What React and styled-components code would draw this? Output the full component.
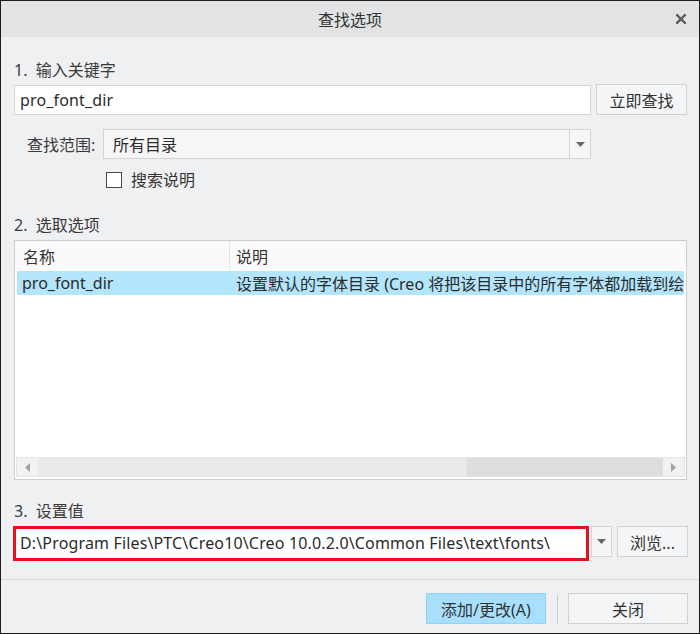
import React from "react";
import styled, { createGlobalStyle } from "styled-components";

const Global = createGlobalStyle`
  html, body { margin: 0; padding: 0; background: #ffffff; }
  body { font-family: "Noto Sans", "Noto Sans CJK SC", sans-serif; }
  * { box-sizing: border-box; }
`;

const Dialog = styled.div`
  width: 700px;
  height: 634px;
  border: 1px solid #1c1c1c;
  background: #eff0f2;
  display: flex;
  flex-direction: column;
  color: #333;
  font-size: 16px;
`;

const TitleBar = styled.div`
  height: 36px;
  flex: none;
  background: #e1e3e5;
  display: grid;
  grid-template-columns: 1fr auto 1fr;
  align-items: center;
`;

const Title = styled.div`
  grid-column: 2;
  font-size: 16px;
  color: #333;
  line-height: 20px;
  padding-top: 1px;
`;

const CloseBtn = styled.div`
  grid-column: 3;
  justify-self: end;
  margin-right: 13px;
  width: 10px;
  height: 10px;
  display: flex;
  margin-top: -1px;
`;

const Body = styled.div`
  flex: 1;
  display: flex;
  flex-direction: column;
  padding: 0 12px 0 13px;
`;

const SectionLabel = styled.div`
  height: 20px;
  line-height: 20px;
  margin-top: ${(p) => p.$mt}px;
  color: #3a3a3a;
  white-space: pre;
`;

const Row = styled.div`
  display: flex;
  align-items: ${(p) => p.$align || "center"};
  margin-top: ${(p) => p.$mt}px;
  padding-left: ${(p) => p.$pl || 0}px;
`;

const TextInput = styled.div`
  flex: 1;
  height: 30px;
  background: #ffffff;
  border: 1px solid #d2d4d6;
  padding: 0 5px;
  display: flex;
  align-items: center;
  color: #2b2b2b;
  white-space: nowrap;
  overflow: hidden;
  letter-spacing: 0.15px;
`;

const Button = styled.div`
  width: ${(p) => p.$w}px;
  height: ${(p) => p.$h || 31}px;
  margin-left: ${(p) => p.$ml || 0}px;
  flex: none;
  background: ${(p) => (p.$primary ? "#a8dffc" : "#f4f5f6")};
  border: 1px solid ${(p) => (p.$primary ? "#8fd4f8" : "#cfd1d3")};
  display: flex;
  align-items: center;
  justify-content: center;
  color: #333;
  white-space: nowrap;
`;

const FieldLabel = styled.div`
  width: 76px;
  flex: none;
  color: #3a3a3a;
`;

const Select = styled.div`
  width: 488px;
  height: 30px;
  display: flex;
  border: 1px solid #d2d4d6;
  background: #f6f6f7;
`;

const SelectText = styled.div`
  flex: 1;
  padding-left: 9px;
  display: flex;
  align-items: center;
  color: #2b2b2b;
`;

const ArrowCell = styled.div`
  width: 21px;
  flex: none;
  border-left: 1px solid #d2d4d6;
  display: flex;
  align-items: center;
  justify-content: center;
`;

const DropBox = styled.div`
  width: 21px;
  height: 31px;
  flex: none;
  margin-left: 2px;
  border: 1px solid #d2d4d6;
  background: #f4f5f6;
  display: flex;
  align-items: center;
  justify-content: center;
`;

const Tri = ({ dir = "down", color = "#666" }) => {
  const pts = {
    down: "0,0 9,0 4.5,5",
    left: "5,0 5,9 0,4.5",
    right: "0,0 0,9 5,4.5",
  }[dir];
  const vb = dir === "down" ? "0 0 9 5" : "0 0 5 9";
  const w = dir === "down" ? 9 : 5;
  const h = dir === "down" ? 5 : 9;
  return (
    <svg width={w} height={h} viewBox={vb}>
      <polygon points={pts} fill={color} />
    </svg>
  );
};

const CheckBox = styled.div`
  width: 16px;
  height: 16px;
  border: 1px solid #4a4a4a;
  background: #fff;
  flex: none;
`;

const CheckText = styled.div`
  margin-left: 9px;
  color: #333;
  line-height: 16px;
`;

const Table = styled.div`
  height: 240px;
  margin-top: 5px;
  border: 1px solid #cbcdcf;
  background: #ffffff;
  display: flex;
  flex-direction: column;
  padding: 0 1px 2px 1px;
`;

const HeaderRow = styled.div`
  height: 29px;
  flex: none;
  display: flex;
  background: #fafafa;
  margin: 0 -1px;
`;

const HeadCell = styled.div`
  width: ${(p) => (p.$w ? `${p.$w}px` : "auto")};
  flex: ${(p) => (p.$w ? "none" : 1)};
  padding-left: ${(p) => p.$pl}px;
  display: flex;
  align-items: center;
  border-right: ${(p) => (p.$w ? "1px solid #e4e5e6" : "none")};
  color: #333;
`;

const List = styled.div`
  flex: 1;
  padding: 1px 1px 0 1px;
`;

const DataRow = styled.div`
  height: 24px;
  display: flex;
  align-items: center;
  background: ${(p) => (p.$selected ? "#b3e5fc" : "transparent")};
  white-space: nowrap;
`;

const DataCell = styled.div`
  width: ${(p) => (p.$w ? `${p.$w}px` : "auto")};
  flex: ${(p) => (p.$w ? "none" : 1)};
  min-width: 0;
  padding-left: ${(p) => p.$pl}px;
  white-space: nowrap;
  color: #2b2b2b;
`;

const HScroll = styled.div`
  height: 20px;
  flex: none;
  display: flex;
  border: 1px solid #e3e4e5;
  background: #dcdddf;
`;

const ScrollArrow = styled.div`
  width: 21px;
  flex: none;
  background: #f1f2f3;
  display: flex;
  align-items: center;
  justify-content: center;
`;

const ScrollThumb = styled.div`
  width: 429px;
  flex: none;
  background: #e9eaeb;
  border-right: 1px solid #e3e4e5;
`;

const ScrollTrack = styled.div`
  flex: 1;
`;

const Highlight = styled.div`
  width: 576px;
  height: 35px;
  flex: none;
  border: 3px solid #e3101d;
  background: #fff;
  display: flex;
  align-items: center;
  padding: 0 4px 1px 4px;
  white-space: nowrap;
  overflow: hidden;
  color: #2b2b2b;
  margin-left: -1px;
  letter-spacing: 0.15px;
`;

const Footer = styled.div`
  height: 54px;
  flex: none;
  border-top: 1px solid #d3d5d7;
  display: flex;
  align-items: flex-start;
  justify-content: flex-end;
  padding: 13px 11px 0 0;
`;

const VSep = styled.div`
  width: 1px;
  height: 29px;
  margin: 2px 10px 0 11px;
  background: #c9cbcd;
`;

export default function App() {
  return (
    <>
      <Global />
      <Dialog>
        <TitleBar>
          <Title>查找选项</Title>
          <CloseBtn>
            <svg width="10" height="10" viewBox="0 0 10 10">
              <path d="M1 1 L9 9 M9 1 L1 9" stroke="#5a5a5a" strokeWidth="2.4" strokeLinecap="square" />
            </svg>
          </CloseBtn>
        </TitleBar>
        <Body>
          <SectionLabel $mt={23}>1.  输入关键字</SectionLabel>
          <Row $mt={4} $align="flex-end">
            <TextInput>pro_font_dir</TextInput>
            <Button $w={91} $ml={5}>立即查找</Button>
          </Row>
          <Row $mt={14} $pl={13}>
            <FieldLabel>查找范围:</FieldLabel>
            <Select>
              <SelectText>所有目录</SelectText>
              <ArrowCell>
                <Tri />
              </ArrowCell>
            </Select>
          </Row>
          <Row $mt={13} $pl={92}>
            <CheckBox />
            <CheckText>搜索说明</CheckText>
          </Row>
          <SectionLabel $mt={27}>2.  选取选项</SectionLabel>
          <Table>
            <HeaderRow>
              <HeadCell $w={215} $pl={8}>名称</HeadCell>
              <HeadCell $pl={6}>说明</HeadCell>
            </HeaderRow>
            <List>
              <DataRow $selected>
                <DataCell $w={212} $pl={5}>pro_font_dir</DataCell>
                <DataCell $pl={7}>设置默认的字体目录 (Creo 将把该目录中的所有字体都加载到绘</DataCell>
              </DataRow>
            </List>
            <HScroll>
              <ScrollArrow>
                <Tri dir="left" color="#a0a2a4" />
              </ScrollArrow>
              <ScrollThumb />
              <ScrollTrack />
              <ScrollArrow>
                <Tri dir="right" color="#a0a2a4" />
              </ScrollArrow>
            </HScroll>
          </Table>
          <SectionLabel $mt={21}>3.  设置值</SectionLabel>
          <Row $mt={5} $align="flex-start">
            <Highlight>D:\Program Files\PTC\Creo10\Creo 10.0.2.0\Common Files\text\fonts\</Highlight>
            <DropBox>
              <Tri />
            </DropBox>
            <Button $w={71} $ml={5}>浏览...</Button>
          </Row>
        </Body>
        <Footer>
          <Button $w={120} $primary>添加/更改(A)</Button>
          <VSep />
          <Button $w={120}>关闭</Button>
        </Footer>
      </Dialog>
    </>
  );
}
